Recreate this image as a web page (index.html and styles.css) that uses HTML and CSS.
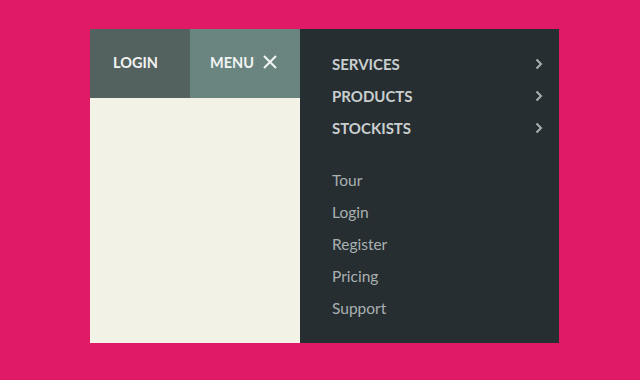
FILE: index.html
```html
<!DOCTYPE html>
<html lang="en">
<head>
  <meta charset="UTF-8">
  <title>Slide Menu</title>
  <link rel="stylesheet" href="styles.css">
</head>
<body>
  <div class="frame">
    <!-- Left: page with the top buttons -->
    <div class="page">
      <div class="topbar">
        <a class="btn btn-login">LOGIN</a>
        <a class="btn btn-menu">MENU
          <svg class="close" width="16" height="16" viewBox="0 0 16 16">
            <path d="M2 2 L14 14 M14 2 L2 14" stroke="#f2f4f3" stroke-width="2" fill="none"/>
          </svg>
        </a>
      </div>
      <div class="content"></div>
    </div>

    <!-- Right: open menu -->
    <nav class="menu">
      <ul class="main-links">
        <li><span>SERVICES</span><svg class="chev" width="8" height="12" viewBox="0 0 8 12"><path d="M1.5 1.5 L6 6 L1.5 10.5" stroke="#aab1b2" stroke-width="2" fill="none"/></svg></li>
        <li><span>PRODUCTS</span><svg class="chev" width="8" height="12" viewBox="0 0 8 12"><path d="M1.5 1.5 L6 6 L1.5 10.5" stroke="#aab1b2" stroke-width="2" fill="none"/></svg></li>
        <li><span>STOCKISTS</span><svg class="chev" width="8" height="12" viewBox="0 0 8 12"><path d="M1.5 1.5 L6 6 L1.5 10.5" stroke="#aab1b2" stroke-width="2" fill="none"/></svg></li>
      </ul>
      <ul class="sub-links">
        <li>Tour</li>
        <li>Login</li>
        <li>Register</li>
        <li>Pricing</li>
        <li>Support</li>
      </ul>
    </nav>
  </div>
</body>
</html>
```

FILE: styles.css
```css
/* Basic reset */
html, body {
  margin: 0;
  padding: 0;
  height: 100%;
}
body {
  background: #e01a67;
  font-family: Lato, "Liberation Sans", sans-serif;
  padding: 29px 0 0 90px;
  box-sizing: border-box;
}
.frame {
  display: flex;
  width: 469px;
  height: 314px;
}
/* Left page */
.page {
  width: 210px;
  display: flex;
  flex-direction: column;
  background: #f3f2e7;
}
.topbar {
  display: flex;
  height: 69px;
}
.btn {
  display: flex;
  align-items: center;
  padding-bottom: 3px;
  box-sizing: border-box;
  font-size: 14.5px;
  font-weight: 700;
  color: #f2f4f3;
}
.btn-login {
  width: 100px;
  padding-left: 23px;
  background: #54625f;
}
.btn-menu {
  width: 110px;
  padding-left: 20px;
  background: #6a8580;
}
.close {
  margin-left: 8px;
}
.content {
  flex: 1;
}
/* Right menu */
.menu {
  flex: 1;
  background: #262e31;
  padding: 19px 16px 0 32px;
}
.menu ul {
  list-style: none;
  margin: 0;
  padding: 0;
}
.menu li {
  height: 32px;
  display: flex;
  align-items: center;
}
.main-links li {
  justify-content: space-between;
  font-size: 15px;
  font-weight: 700;
  color: #c9cecf;
}
.sub-links {
  margin-top: 20px !important;
}
.sub-links li {
  font-size: 15.5px;
  color: #a9b1b2;
}
```
